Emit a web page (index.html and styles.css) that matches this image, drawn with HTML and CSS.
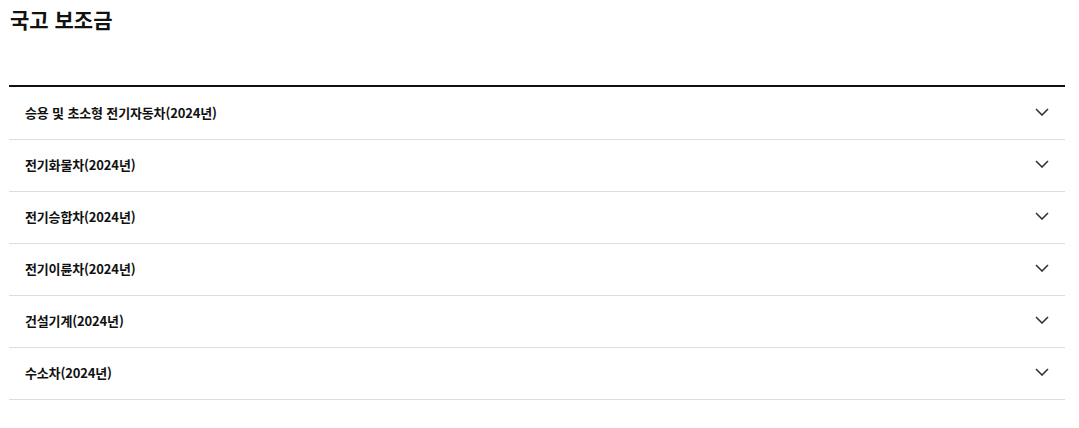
FILE: index.html
```html
<!DOCTYPE html>
<html lang="ko">
<head>
    <meta charset="UTF-8">
    <meta name="viewport" content="width=device-width, initial-scale=1.0">
    <title>국고 보조금</title>
    <link rel="stylesheet" href="styles.css">
</head>
<body>
    <div class="container">
        <h2 class="page-title">국고 보조금</h2>

        <ul class="accordion">
            <li class="acc-item">
                <span class="acc-label">승용 및 초소형 전기자동차(2024년)</span>
                <svg class="chevron" viewBox="0 0 14 8"><path d="M1 1l6 6 6-6"/></svg>
            </li>
            <li class="acc-item">
                <span class="acc-label">전기화물차(2024년)</span>
                <svg class="chevron" viewBox="0 0 14 8"><path d="M1 1l6 6 6-6"/></svg>
            </li>
            <li class="acc-item">
                <span class="acc-label">전기승합차(2024년)</span>
                <svg class="chevron" viewBox="0 0 14 8"><path d="M1 1l6 6 6-6"/></svg>
            </li>
            <li class="acc-item">
                <span class="acc-label">전기이륜차(2024년)</span>
                <svg class="chevron" viewBox="0 0 14 8"><path d="M1 1l6 6 6-6"/></svg>
            </li>
            <li class="acc-item">
                <span class="acc-label">건설기계(2024년)</span>
                <svg class="chevron" viewBox="0 0 14 8"><path d="M1 1l6 6 6-6"/></svg>
            </li>
            <li class="acc-item">
                <span class="acc-label">수소차(2024년)</span>
                <svg class="chevron" viewBox="0 0 14 8"><path d="M1 1l6 6 6-6"/></svg>
            </li>
        </ul>
    </div>
</body>
</html>
```

FILE: styles.css
```css
body {
    font-family: "Noto Sans CJK KR", "Noto Sans", sans-serif;
    margin: 0;
    padding: 0;
    background-color: #ffffff;
    color: #111111;
}

.container {
    width: 1056px;
    margin-left: 9px;
}

.page-title {
    box-sizing: border-box;
    height: 85px;
    margin: 0;
    padding-top: 4px;
    padding-left: 1px;
    font-size: 21px;
    font-weight: 700;
    line-height: 30px;
}

.accordion {
    list-style: none;
    margin: 0;
    padding: 1px 0 0;
    border-top: 2px solid #111111;
}

.acc-item {
    box-sizing: border-box;
    display: flex;
    align-items: center;
    justify-content: space-between;
    height: 52px;
    padding: 0 16px 3px 16px;
    border-bottom: 1px solid #dddddd;
}

.acc-label {
    font-size: 13px;
    font-weight: 700;
    letter-spacing: -0.15px;
    color: #111111;
}

.chevron {
    width: 14px;
    height: 8px;
    fill: none;
    stroke: #333333;
    stroke-width: 1.6;
}
```
